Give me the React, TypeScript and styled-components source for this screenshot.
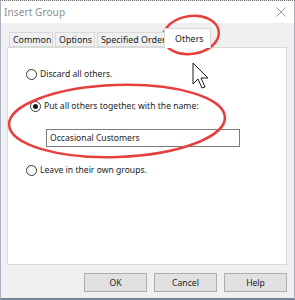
import React from 'react';
import styled, { createGlobalStyle } from 'styled-components';

const Global = createGlobalStyle`
html, body { margin: 0; padding: 0; background: #ffffff; }
* { box-sizing: border-box; }
`;

const font = `"Noto Sans", "Open Sans", "Liberation Sans", sans-serif`;

const Window = styled.div`
position: relative;
width: 295px;
height: 300px;
display: flex;
flex-direction: column;
background: #f0f0f0;
border-top: 1px dotted #6a6a6a;
border-left: 1px solid #a8b2be;
border-right: 1px solid #a8b2be;
border-bottom: 2px solid #72839a;
font-family: ${font};
color: #1b1b1b;
overflow: hidden;
`;

const TitleBar = styled.div`
height: 22px;
flex: 0 0 auto;
background: #ffffff;
display: flex;
align-items: center;
justify-content: space-between;
padding: 0 8px 0 3px;
`;

const Title = styled.span`
font-size: 10px;
color: #8f8f8f;
letter-spacing: 0.1px;
`;

const Body = styled.div`
flex: 1;
display: flex;
flex-direction: column;
padding: 5px 7px 0 6px;
`;

const TabStrip = styled.div`
height: 19px;
display: flex;
align-items: flex-end;
padding-left: 2px;
`;

const Tab = styled.div<{ $w: number; $active?: boolean }>`
position: relative;
width: ${p => p.$w}px;
height: ${p => (p.$active ? 20 : 15)}px;
margin-left: ${p => (p.$active ? -3 : 0)}px;
margin-right: ${p => (p.$active ? 0 : 2)}px;
margin-bottom: ${p => (p.$active ? -1 : 0)}px;
z-index: ${p => (p.$active ? 2 : 1)};
background: ${p => (p.$active ? '#ffffff' : '#f0f0f0')};
border: 1px solid #d9d9d9;
border-bottom: ${p => (p.$active ? 'none' : '1px solid #d9d9d9')};
display: flex;
align-items: center;
padding-left: ${p => (p.$active ? 10 : 3)}px;
font-size: 8.9px;
white-space: nowrap;
overflow: hidden;
`;

const Panel = styled.div`
height: 218px;
background: #ffffff;
border: 1px solid #d9d9d9;
display: flex;
flex-direction: column;
padding: 18px 0 0 18px;
`;

const Option = styled.label<{ $indent?: number; $gap?: number }>`
height: 16px;
display: flex;
align-items: center;
gap: 3px;
margin-left: ${p => p.$indent || 0}px;
margin-bottom: ${p => p.$gap || 0}px;
font-size: 8.6px;
`;

const Radio = styled.span<{ $on?: boolean }>`
width: 11px;
height: 11px;
border-radius: 50%;
border: 1px solid #3a3a3a;
background: #ffffff;
display: flex;
align-items: center;
justify-content: center;
&::after {
  content: '';
  display: ${p => (p.$on ? 'block' : 'none')};
  width: 5px;
  height: 5px;
  border-radius: 50%;
  background: #1b1b1b;
}
`;

const NameInput = styled.div`
width: 194px;
height: 18px;
margin: 0 0 15px 20px;
border: 1px solid #7a7a7a;
display: flex;
align-items: center;
padding-left: 3px;
font-size: 8.6px;
`;

const ButtonRow = styled.div`
display: flex;
justify-content: flex-end;
gap: 7px;
padding-top: 8px;
`;

const Button = styled.div`
width: 63px;
height: 19px;
background: #e1e1e1;
border: 1px solid #adadad;
display: flex;
align-items: center;
justify-content: center;
font-size: 8.6px;
`;

const Overlay = styled.svg`
position: absolute;
left: 0;
top: 0;
pointer-events: none;
`;

const Close = () => (
  <svg width="10" height="10" viewBox="0 0 10 10">
    <path d="M0.5 0.5 L9.5 9.5 M9.5 0.5 L0.5 9.5" stroke="#9a9a9a" strokeWidth="1" />
  </svg>
);

export default function App() {
  return (
    <>
      <Global />
      <Window>
        <TitleBar>
          <Title>Insert Group</Title>
          <Close />
        </TitleBar>
        <Body>
          <TabStrip>
            <Tab $w={44}>Common</Tab>
            <Tab $w={40}>Options</Tab>
            <Tab $w={68}>Specified Order</Tab>
            <Tab $w={47} $active>Others</Tab>
          </TabStrip>
          <Panel>
            <Option $gap={16}><Radio />Discard all others.</Option>
            <Option $indent={4} $gap={15}><Radio $on />Put all others together, with the name:</Option>
            <NameInput>Occasional Customers</NameInput>
            <Option><Radio />Leave in their own groups.</Option>
          </Panel>
          <ButtonRow>
            <Button>OK</Button>
            <Button>Cancel</Button>
            <Button>Help</Button>
          </ButtonRow>
        </Body>
        <Overlay width="295" height="300" viewBox="0 0 295 300">
          <ellipse cx="190" cy="34" rx="28" ry="19" transform="rotate(-8 190 34)"
            fill="none" stroke="#e5403e" strokeWidth="2.5" />
          <ellipse cx="116" cy="120" rx="108" ry="36" transform="rotate(-2 116 120)"
            fill="none" stroke="#e5403e" strokeWidth="2.5" />
          <path d="M192 62 L192 83 L197 78 L201 87 L204 86 L200 77 L207 77 Z"
            fill="#ffffff" stroke="#1b1b1b" strokeWidth="1" strokeLinejoin="miter" />
        </Overlay>
      </Window>
    </>
  );
}
